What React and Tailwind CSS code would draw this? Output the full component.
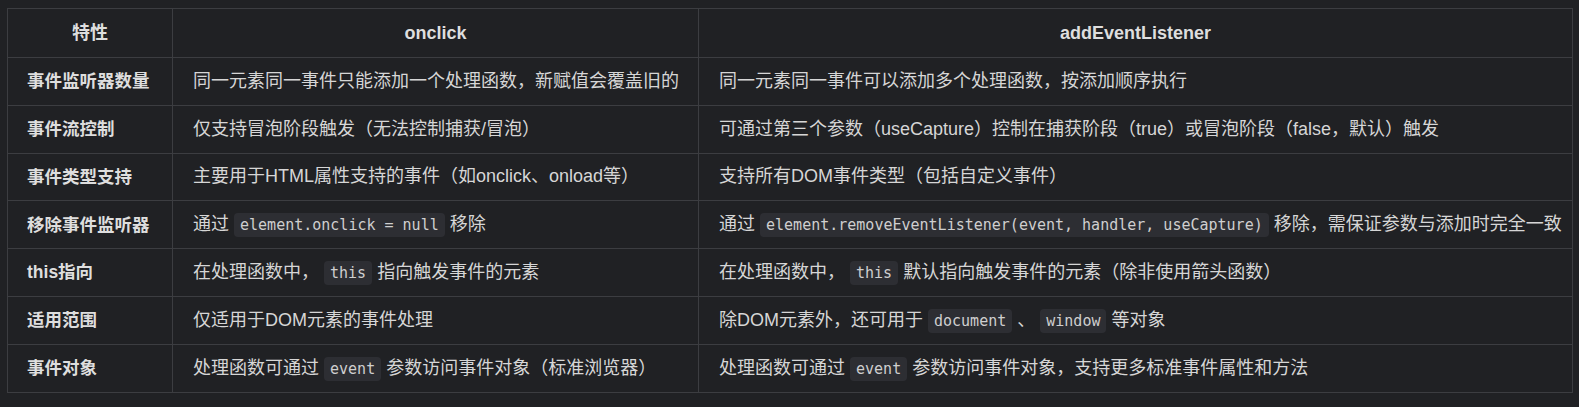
import React from 'react';

const C = ({ children }) => (
  <code className="rounded-[4px] bg-[#2d2e33] px-[6px] py-[3px] font-['DejaVu_Sans_Mono','Liberation_Mono',monospace] text-[15px] text-[#cfcfcf]">
    {children}
  </code>
);

const rows = [
  ['事件监听器数量', '同一元素同一事件只能添加一个处理函数，新赋值会覆盖旧的', '同一元素同一事件可以添加多个处理函数，按添加顺序执行'],
  ['事件流控制', '仅支持冒泡阶段触发（无法控制捕获/冒泡）', '可通过第三个参数（useCapture）控制在捕获阶段（true）或冒泡阶段（false，默认）触发'],
  ['事件类型支持', '主要用于HTML属性支持的事件（如onclick、onload等）', '支持所有DOM事件类型（包括自定义事件）'],
  [
    '移除事件监听器',
    <>通过 <C>element.onclick = null</C> 移除</>,
    <>通过 <C>element.removeEventListener(event, handler, useCapture)</C> 移除，需保证参数与添加时完全一致</>,
  ],
  [
    'this指向',
    <>在处理函数中， <C>this</C> 指向触发事件的元素</>,
    <>在处理函数中， <C>this</C> 默认指向触发事件的元素（除非使用箭头函数）</>,
  ],
  [
    '适用范围',
    '仅适用于DOM元素的事件处理',
    <>除DOM元素外，还可用于 <C>document</C> 、 <C>window</C> 等对象</>,
  ],
  [
    '事件对象',
    <>处理函数可通过 <C>event</C> 参数访问事件对象（标准浏览器）</>,
    <>处理函数可通过 <C>event</C> 参数访问事件对象，支持更多标准事件属性和方法</>,
  ],
];

export default function App() {
  return (
    <div className="min-h-[407px] w-full bg-[#202124] pl-[7px] pt-[8px] font-['Liberation_Sans','Noto_Sans_CJK_SC',sans-serif] text-[18px] text-[#d6d6d6]">
      <table className="w-[1565px] table-fixed border-collapse">
        <colgroup>
          <col className="w-[165px]" />
          <col className="w-[526px]" />
          <col className="w-[874px]" />
        </colgroup>
        <thead>
          <tr>
            {['特性', 'onclick', 'addEventListener'].map((h) => (
              <th key={h} className="h-[49px] border border-[#3c3d41] px-5 text-center font-bold text-[#dedede]">
                {h}
              </th>
            ))}
          </tr>
        </thead>
        <tbody>
          {rows.map((r, i) => (
            <tr key={i}>
              <td className="h-[47.8px] whitespace-nowrap border border-[#3c3d41] pl-[19px] pr-0 text-[17.5px] font-bold text-[#dedede]">{r[0]}</td>
              <td className="h-[47.8px] whitespace-nowrap border border-[#3c3d41] px-5">{r[1]}</td>
              <td className="h-[47.8px] whitespace-nowrap border border-[#3c3d41] px-5">{r[2]}</td>
            </tr>
          ))}
        </tbody>
      </table>
    </div>
  );
}
